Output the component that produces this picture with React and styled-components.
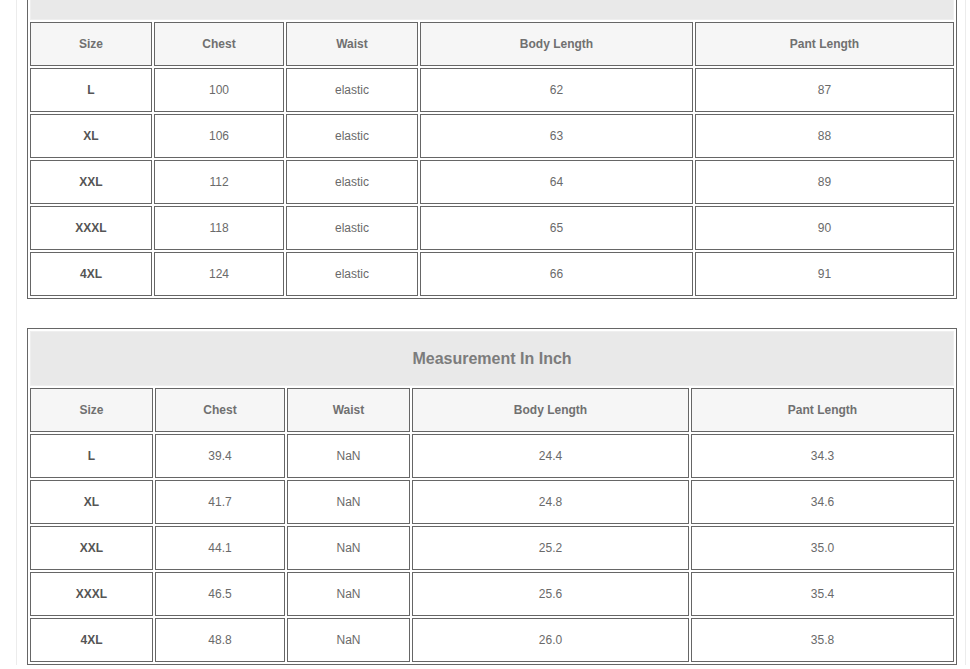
import React from 'react';
import styled, { createGlobalStyle } from 'styled-components';

const GlobalStyle = createGlobalStyle`
  html, body {
    margin: 0;
    padding: 0;
    background: #fff;
    font-family: "Liberation Sans", Arial, sans-serif;
    overflow: hidden;
  }
`;

const Page = styled.div`
  margin: -38px 0 0 16px;
  width: 950px;
  box-sizing: border-box;
  border-left: 1px solid #ececec;
  border-right: 1px solid #ececec;
  padding: 0 8px 0 10px;
`;

const SizeTable = styled.div`
  display: grid;
  grid-template-columns: ${(p) => p.$cols.map((c) => `${c}px`).join(' ')};
  gap: 2px;
  padding: 2px;
  border: 1px solid #666;
  width: 930px;
  box-sizing: border-box;
  margin-bottom: ${(p) => p.$spaceAfter || 0}px;
`;

const Title = styled.div`
  grid-column: 1 / -1;
  height: 55px;
  box-sizing: border-box;
  border: 1px solid #efefef;
  background: #e9e9e9;
  display: flex;
  align-items: center;
  justify-content: center;
  font-size: 16px;
  font-weight: bold;
  color: #7c7c7c;
`;

const Cell = styled.div`
  height: 44px;
  box-sizing: border-box;
  border: 1px solid #666;
  display: flex;
  align-items: center;
  justify-content: center;
  font-size: 12px;
  color: ${(p) => (p.$head ? '#707070' : p.$bold ? '#555' : '#6a6a6a')};
  font-weight: ${(p) => (p.$bold ? 'bold' : 'normal')};
  background: ${(p) => (p.$head ? '#f6f6f6' : '#fff')};
`;

const HEADERS = ['Size', 'Chest', 'Waist', 'Body Length', 'Pant Length'];

const CM_ROWS = [
  ['L', '100', 'elastic', '62', '87'],
  ['XL', '106', 'elastic', '63', '88'],
  ['XXL', '112', 'elastic', '64', '89'],
  ['XXXL', '118', 'elastic', '65', '90'],
  ['4XL', '124', 'elastic', '66', '91'],
];

const INCH_ROWS = [
  ['L', '39.4', 'NaN', '24.4', '34.3'],
  ['XL', '41.7', 'NaN', '24.8', '34.6'],
  ['XXL', '44.1', 'NaN', '25.2', '35.0'],
  ['XXXL', '46.5', 'NaN', '25.6', '35.4'],
  ['4XL', '48.8', 'NaN', '26.0', '35.8'],
];

const Chart = ({ title, cols, rows, spaceAfter }) => (
  <SizeTable $cols={cols} $spaceAfter={spaceAfter}>
    <Title>{title}</Title>
    {HEADERS.map((h) => (
      <Cell key={h} $head $bold>
        {h}
      </Cell>
    ))}
    {rows.map((row) =>
      row.map((v, i) => (
        <Cell key={row[0] + i} $bold={i === 0}>
          {v}
        </Cell>
      ))
    )}
  </SizeTable>
);

const App = () => (
  <>
    <GlobalStyle />
    <Page>
      <Chart
        title="Measurement In CM"
        cols={[122, 130, 132, 273, 259]}
        rows={CM_ROWS}
        spaceAfter={29}
      />
      <Chart
        title="Measurement In Inch"
        cols={[123, 130, 123, 277, 263]}
        rows={INCH_ROWS}
      />
    </Page>
  </>
);

export default App;
